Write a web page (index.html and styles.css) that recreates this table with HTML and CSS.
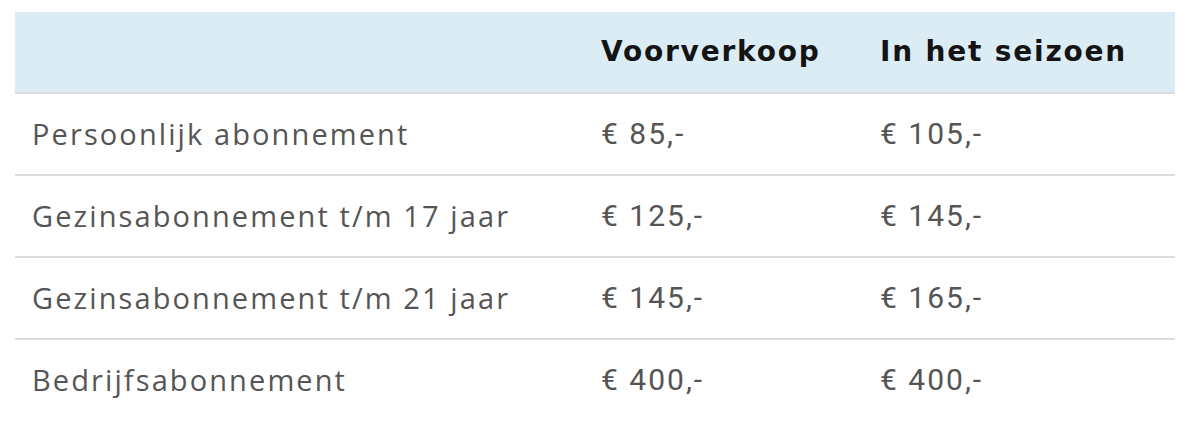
FILE: index.html
```html
<!DOCTYPE html>
<html lang="nl">
<head>
<meta charset="utf-8">
<title>Abonnementen</title>
<link rel="stylesheet" href="styles.css">
</head>
<body>
<div class="wrap">
  <table class="prices">
    <colgroup>
      <col class="c-name">
      <col class="c-pre">
      <col class="c-season">
    </colgroup>
    <thead>
      <tr>
        <th></th>
        <th>Voorverkoop</th>
        <th>In het seizoen</th>
      </tr>
    </thead>
    <tbody>
      <tr>
        <td class="name">Persoonlijk abonnement</td>
        <td class="price">€ 85,-</td>
        <td class="price">€ 105,-</td>
      </tr>
      <tr>
        <td class="name">Gezinsabonnement t/m 17 jaar</td>
        <td class="price">€ 125,-</td>
        <td class="price">€ 145,-</td>
      </tr>
      <tr>
        <td class="name">Gezinsabonnement t/m 21 jaar</td>
        <td class="price">€ 145,-</td>
        <td class="price">€ 165,-</td>
      </tr>
      <tr>
        <td class="name">Bedrijfsabonnement</td>
        <td class="price">€ 400,-</td>
        <td class="price">€ 400,-</td>
      </tr>
    </tbody>
  </table>
</div>
</body>
</html>
```

FILE: styles.css
```css
html, body {
  margin: 0;
  padding: 0;
  background: #ffffff;
}

.wrap {
  padding: 12px 21px 0 15px;
}

.prices {
  width: 1160px;
  border-collapse: collapse;
  table-layout: fixed;
}

.c-name { width: 569px; }
.c-pre { width: 279px; }
.c-season { width: 312px; }

.prices thead tr {
  background: #dcecf4;
}

.prices th {
  height: 80px;
  padding: 0 0 0 17px;
  text-align: left;
  vertical-align: middle;
  font-family: "DejaVu Sans", "Liberation Sans", sans-serif;
  font-weight: 700;
  font-size: 28px;
  line-height: 1;
  letter-spacing: 1.8px;
  color: #141414;
  border-bottom: 2px solid #dcdcdc;
}

.prices td {
  height: 80px;
  padding: 0 0 0 17px;
  vertical-align: middle;
  color: #555555;
  border-bottom: 2px solid #dcdcdc;
}

.prices tbody tr:last-child td {
  border-bottom: none;
}

.name {
  font-family: "Open Sans", sans-serif;
  font-size: 29px;
  line-height: 1.2;
  letter-spacing: 2.1px;
}

.price {
  font-family: Roboto, "Liberation Sans", sans-serif;
  font-size: 30px;
  line-height: 1.2;
  letter-spacing: 2px;
}
```
